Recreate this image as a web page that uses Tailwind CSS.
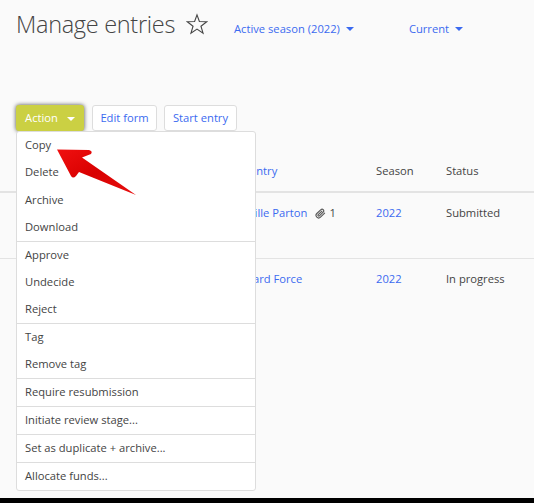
<!doctype html>
<html>
<head>
    <meta charset="UTF-8">
    <script src="https://cdn.jsdelivr.net/npm/@tailwindcss/browser@4"></script>
    <title>Manage entries</title>
</head>
<body class="bg-black font-['Open_Sans',sans-serif] text-[11.2px] text-[#444]">
    <div class="relative h-[498px] overflow-hidden bg-[#fafafa]">

        <!-- Header -->
        <div class="flex h-[105px] items-start pl-4 pt-[5px]">
            <h1 class="w-[158px] whitespace-nowrap text-[23.5px] leading-[38px] font-light tracking-[-0.3px] text-[#444]">Manage entries</h1>
            <svg class="ml-[12px] mt-[8px] h-[22px] w-[22px]" viewBox="0 0 24 24" fill="none" stroke="#444" stroke-width="1.2" stroke-linejoin="miter"><path d="M12 2 L14.6 9.3 L22.6 9.5 L16.3 14.4 L18.6 22 L12 17.6 L5.4 22 L7.7 14.4 L1.4 9.5 L9.4 9.3 Z"/></svg>
            <a class="ml-[26px] mt-[16px] flex items-center gap-[6px] leading-[16px] text-[#3b6af0]">Active season (2022)
                <span class="h-0 w-0 border-x-[4px] border-t-[4px] border-x-transparent border-t-[#3b6af0]"></span></a>
            <a class="ml-[55px] mt-[16px] flex items-center gap-[6px] leading-[16px] text-[#3b6af0]">Current
                <span class="h-0 w-0 border-x-[4px] border-t-[4px] border-x-transparent border-t-[#3b6af0]"></span></a>
        </div>

        <!-- Buttons -->
        <div class="flex items-center pl-4">
            <button class="flex h-[26px] w-[68px] items-center justify-center gap-[9px] rounded-[3px] bg-[#cbd043] pt-px text-white shadow-[0_0_4px_rgba(0,0,0,0.7)]">Action
                <span class="h-0 w-0 border-x-[4px] border-t-[4px] border-x-transparent border-t-white"></span></button>
            <button class="ml-2 h-[26px] w-[65px] rounded-[3px] border border-[#ddd] bg-white pt-px text-[#3b6af0]">Edit form</button>
            <button class="ml-[7px] h-[26px] w-[73px] rounded-[3px] border border-[#ddd] bg-white pt-px text-[#3b6af0]">Start entry</button>
        </div>

        <!-- Table -->
        <div class="mt-[30px]">
            <div class="flex h-[32px] items-start border-b-[2px] border-[#e3e3e3] leading-[20px]">
                <a class="w-[376px] pl-[250px] text-[#3b6af0]">Entry</a>
                <span class="w-[70px]">Season</span>
                <span>Status</span>
            </div>
            <div class="flex h-[66px] items-start border-b border-[#e3e3e3] pt-[10px] leading-[20px]">
                <div class="flex w-[376px] items-center pl-[231px]">
                    <a class="text-[#3b6af0]">Camille Parton</a>
                    <svg class="ml-[8px] h-[11px] w-[11px]" viewBox="0 0 24 24" fill="none" stroke="#555" stroke-width="2.4" stroke-linecap="round"><path d="M21 11 L12 20 a5.5 5.5 0 0 1 -8 -8 L13 3.5 a3.7 3.7 0 0 1 5.2 5.2 L9.6 17 a1.8 1.8 0 0 1 -2.6 -2.6 L15 6.8"/></svg>
                    <span class="ml-[3px]">1</span>
                </div>
                <a class="w-[70px] text-[#3b6af0]">2022</a>
                <span>Submitted</span>
            </div>
            <div class="flex items-start pt-[10px] leading-[20px]">
                <a class="w-[376px] pl-[231px] text-[#3b6af0]">Richard Force</a>
                <a class="w-[70px] text-[#3b6af0]">2022</a>
                <span>In progress</span>
            </div>
        </div>

        <!-- Action menu -->
        <div class="absolute left-4 top-[131px] w-[240px] rounded-[3px] border border-[#ddd] bg-white leading-[26px]">
            <div class="border-b border-[#ddd]">
                <div class="h-[27.25px] pl-2">Copy</div>
                <div class="h-[27.25px] pl-2">Delete</div>
                <div class="h-[27.25px] pl-2">Archive</div>
                <div class="h-[27.25px] pl-2">Download</div>
            </div>
            <div class="border-b border-[#ddd]">
                <div class="h-[27px] pl-2">Approve</div>
                <div class="h-[27px] pl-2">Undecide</div>
                <div class="h-[27px] pl-2">Reject</div>
            </div>
            <div class="border-b border-[#ddd]">
                <div class="h-[27px] pl-2">Tag</div>
                <div class="h-[27px] pl-2">Remove tag</div>
            </div>
            <div class="border-b border-[#ddd]"><div class="h-[27px] pl-2">Require resubmission</div></div>
            <div class="border-b border-[#ddd]"><div class="h-[27px] pl-2">Initiate review stage...</div></div>
            <div class="border-b border-[#ddd]"><div class="h-[27px] pl-2">Set as duplicate + archive...</div></div>
            <div><div class="h-[27px] pl-2">Allocate funds...</div></div>
        </div>

        <!-- Red arrow annotation -->
        <svg class="absolute left-0 top-0" width="534" height="498" viewBox="0 0 534 498">
            <defs>
                <linearGradient id="arrowFill" x1="0" y1="0" x2="1" y2="1">
                    <stop offset="0" stop-color="#f01010"/>
                    <stop offset="0.5" stop-color="#d80000"/>
                    <stop offset="1" stop-color="#e81010"/>
                </linearGradient>
            </defs>
            <path d="M57 149.5 L89 150 Q93 151 91 154 L82 157.5 L136 195 L79 172 L76 176 Q73 179 71 176 Z" fill="url(#arrowFill)"/>
        </svg>
    </div>
</body>
</html>
